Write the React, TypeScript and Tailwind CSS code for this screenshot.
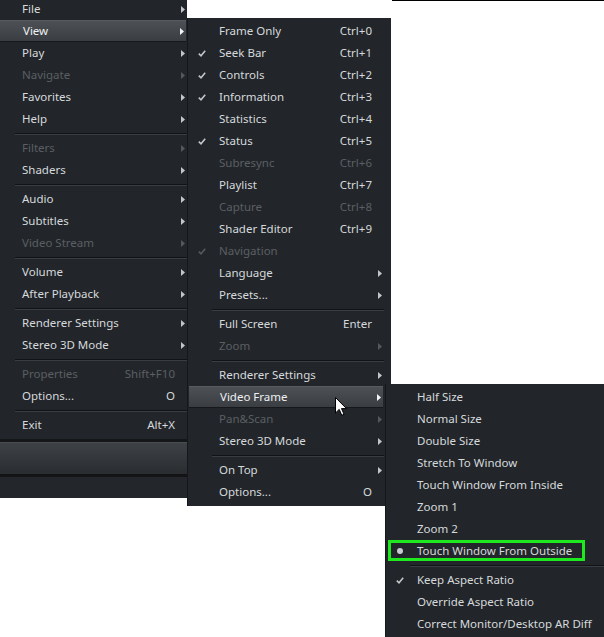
type Item =
  | 'sep'
  | {
      label: string;
      shortcut?: string;
      sub?: boolean;
      check?: boolean;
      dot?: boolean;
      disabled?: boolean;
      active?: boolean;
      marked?: boolean;
    };

const mainMenu: Item[] = [
  { label: 'File', sub: true },
  { label: 'View', sub: true, active: true },
  { label: 'Play', sub: true },
  { label: 'Navigate', sub: true, disabled: true },
  { label: 'Favorites', sub: true },
  { label: 'Help', sub: true },
  'sep',
  { label: 'Filters', sub: true, disabled: true },
  { label: 'Shaders', sub: true },
  'sep',
  { label: 'Audio', sub: true },
  { label: 'Subtitles', sub: true },
  { label: 'Video Stream', sub: true, disabled: true },
  'sep',
  { label: 'Volume', sub: true },
  { label: 'After Playback', sub: true },
  'sep',
  { label: 'Renderer Settings', sub: true },
  { label: 'Stereo 3D Mode', sub: true },
  'sep',
  { label: 'Properties', shortcut: 'Shift+F10', disabled: true },
  { label: 'Options...', shortcut: 'O' },
  'sep',
  { label: 'Exit', shortcut: 'Alt+X' },
];

const viewMenu: Item[] = [
  { label: 'Frame Only', shortcut: 'Ctrl+0' },
  { label: 'Seek Bar', shortcut: 'Ctrl+1', check: true },
  { label: 'Controls', shortcut: 'Ctrl+2', check: true },
  { label: 'Information', shortcut: 'Ctrl+3', check: true },
  { label: 'Statistics', shortcut: 'Ctrl+4' },
  { label: 'Status', shortcut: 'Ctrl+5', check: true },
  { label: 'Subresync', shortcut: 'Ctrl+6', disabled: true },
  { label: 'Playlist', shortcut: 'Ctrl+7' },
  { label: 'Capture', shortcut: 'Ctrl+8', disabled: true },
  { label: 'Shader Editor', shortcut: 'Ctrl+9' },
  { label: 'Navigation', check: true, disabled: true },
  { label: 'Language', sub: true },
  { label: 'Presets...', sub: true },
  'sep',
  { label: 'Full Screen', shortcut: 'Enter' },
  { label: 'Zoom', sub: true, disabled: true },
  'sep',
  { label: 'Renderer Settings', sub: true },
  { label: 'Video Frame', sub: true, active: true },
  { label: 'Pan&Scan', sub: true, disabled: true },
  { label: 'Stereo 3D Mode', sub: true },
  'sep',
  { label: 'On Top', sub: true },
  { label: 'Options...', shortcut: 'O' },
];

const frameMenu: Item[] = [
  { label: 'Half Size' },
  { label: 'Normal Size' },
  { label: 'Double Size' },
  { label: 'Stretch To Window' },
  { label: 'Touch Window From Inside' },
  { label: 'Zoom 1' },
  { label: 'Zoom 2' },
  { label: 'Touch Window From Outside', dot: true, marked: true },
  'sep',
  { label: 'Keep Aspect Ratio', check: true },
  { label: 'Override Aspect Ratio' },
  { label: 'Correct Monitor/Desktop AR Diff' },
];

function Check({ color }: { color: string }) {
  return (
    <svg width="8" height="7" viewBox="0 0 8 7">
      <path d="M0.8 3.6 L3 5.8 L7.2 0.8" fill="none" stroke={color} strokeWidth="1.6" />
    </svg>
  );
}

function Arrow({ color }: { color: string }) {
  return (
    <svg width="4" height="7" viewBox="0 0 4 7">
      <path d="M0 0 L4 3.5 L0 7 Z" fill={color} />
    </svg>
  );
}

function MenuRow({ item }: { item: Exclude<Item, 'sep'> }) {
  const text = item.disabled ? 'text-[#5b5f63]' : item.active ? 'text-[#eef0f2]' : 'text-[#d6d9dc]';
  const icon = item.disabled ? '#55595d' : item.active ? '#f4f5f6' : '#c3c6c9';
  return (
    <div
      className={`relative flex items-center h-[22px] ${
        item.active
          ? 'bg-gradient-to-b from-[#4d5155] to-[#3a3e42] border-t border-[#575b5f] border-b border-b-[#16191c] mx-[1px]'
          : ''
      }`}
    >
      <div className="w-[31px] pl-[10px] flex items-center">
        {item.check && <Check color={icon} />}
        {item.dot && <div className="ml-[1px] w-[6px] h-[6px] rounded-full bg-[#c9ccce]" />}
      </div>
      <span className={`flex-1 whitespace-nowrap ${text}`}>{item.label}</span>
      {item.shortcut && <span className={`whitespace-nowrap ${text}`}>{item.shortcut}</span>}
      <div className="w-[12px] pl-[6px] flex items-center">{item.sub && <Arrow color={icon} />}</div>
      {item.marked && (
        <div className="absolute left-[2px] top-0 w-[197px] h-[21px] border-[3px] border-[#1ee81e]" />
      )}
    </div>
  );
}

function Menu({ items, className }: { items: Item[]; className: string }) {
  return (
    <div className={`bg-[#22262a] border-l border-[#15181b] ${className}`}>
      {items.map((it, i) =>
        it === 'sep' ? (
          <div key={i} className="h-[7px] flex items-center pl-[24px]">
            <div className="w-full border-t border-[#111316] border-b border-b-[#3a3e42]" />
          </div>
        ) : (
          <MenuRow key={i} item={it} />
        )
      )}
    </div>
  );
}

export default function App() {
  return (
    <div
      className="relative w-[604px] h-[637px] bg-white overflow-hidden text-[11.5px] leading-none"
      style={{ fontFamily: '"Noto Sans", "Open Sans", sans-serif' }}
    >
      <div className="absolute left-0 right-0 top-0 h-px bg-black ml-[392px]" />

      {/* main context menu, cut off on the left */}
      <div className="absolute left-[-9px] top-[-2px] w-[196px]">
        <Menu items={mainMenu} className="pr-0 pb-[3px] border-l-0" />
        <div className="h-[3px] bg-[#141618]" />
        <div className="h-[32px] bg-gradient-to-b from-[#3e4145] to-[#2a2d30] border-t border-[#4a4d50]" />
        <div className="h-[3px] bg-[#121416]" />
        <div className="h-[21px] bg-[#23262a]" />
      </div>

      {/* View submenu */}
      <Menu items={viewMenu} className="absolute left-[187px] top-[18px] w-[204px] pt-[2px] pb-[3px] pr-[7px]" />

      {/* Video Frame submenu */}
      <Menu items={frameMenu} className="absolute left-[385px] top-[384px] w-[240px] pt-[2px] pb-[4px]" />

      {/* mouse pointer */}
      <svg className="absolute left-[335px] top-[397px]" width="13" height="20" viewBox="0 0 13 20">
        <path
          d="M0.5 0.5 L0.5 16 L4.2 12.4 L6.8 18.3 L9 17.3 L6.5 11.6 L11.5 11.6 Z"
          fill="#fff"
          stroke="#000"
          strokeWidth="1"
          strokeLinejoin="miter"
        />
      </svg>
    </div>
  );
}
